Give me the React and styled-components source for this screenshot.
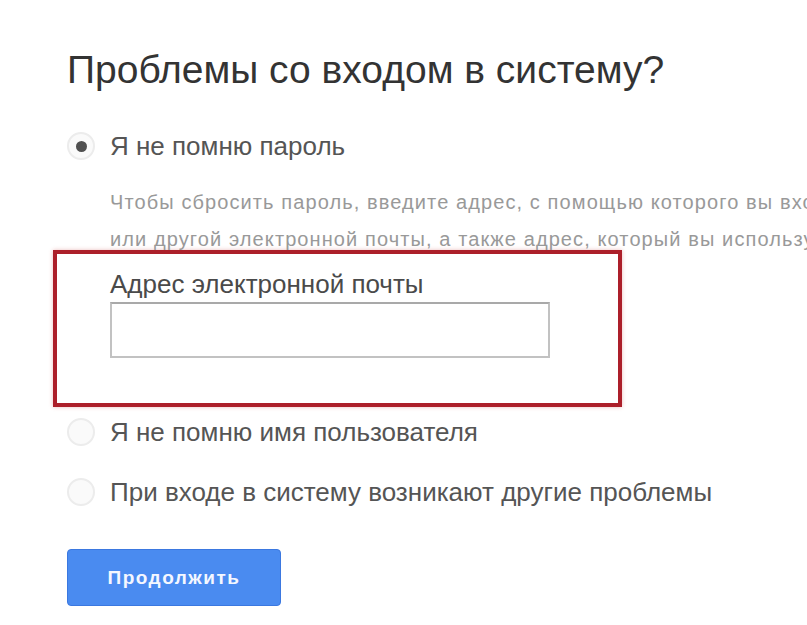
import styled, { createGlobalStyle } from "styled-components";

const GlobalStyle = createGlobalStyle`
  html, body {
    margin: 0;
    padding: 0;
    background: #ffffff;
    overflow: hidden;
  }
  body {
    font-family: "Liberation Sans", Arial, sans-serif;
  }
`;

const options = [
  { id: "password", label: "Я не помню пароль" },
  { id: "username", label: "Я не помню имя пользователя" },
  { id: "other", label: "При входе в систему возникают другие проблемы" },
];

function App() {
  return (
    <Page>
      <GlobalStyle />
      <Title>Проблемы со входом в систему?</Title>

      <Option top={36}>
        <Radio checked />
        <OptionLabel>{options[0].label}</OptionLabel>
      </Option>

      <Hint>
        <HintLine>
          Чтобы сбросить пароль, введите адрес, с помощью которого вы входите в аккаунт Google,
        </HintLine>
        <HintLine>
          или другой электронной почты, а также адрес, который вы используете для восстановления.
        </HintLine>
      </Hint>

      <Highlight>
        <FieldLabel>Адрес электронной почты</FieldLabel>
        <EmailInput type="text" />
      </Highlight>

      <Option top={9}>
        <Radio />
        <OptionLabel>{options[1].label}</OptionLabel>
      </Option>
      <Option top={28}>
        <Radio />
        <OptionLabel>{options[2].label}</OptionLabel>
      </Option>

      <ContinueButton>Продолжить</ContinueButton>
    </Page>
  );
}

const Page = styled.div`
  width: 807px;
  height: 625px;
  padding: 46px 0 0 53px;
  box-sizing: border-box;
  overflow: hidden;
`;

const Title = styled.h1`
  margin: 0 0 0 14px;
  font-size: 39px;
  font-weight: normal;
  line-height: 48px;
  color: #333333;
  white-space: nowrap;
`;

const Option = styled.div`
  display: flex;
  align-items: center;
  height: 32px;
  margin-top: ${(p) => p.top}px;
  margin-left: 14px;
`;

const Radio = styled.span`
  width: 28px;
  height: 28px;
  border-radius: 50%;
  border: 2px solid #ececec;
  background: #fafafa;
  box-sizing: border-box;
  margin-right: 15px;
  display: flex;
  align-items: center;
  justify-content: center;
  flex-shrink: 0;

  &::after {
    content: "";
    width: 11px;
    height: 11px;
    border-radius: 50%;
    background: #505050;
    display: ${(p) => (p.checked ? "block" : "none")};
  }
`;

const OptionLabel = styled.span`
  font-size: 26px;
  color: #555555;
  white-space: nowrap;
`;

const Hint = styled.div`
  margin: 22px 0 0 57px;
  font-size: 20px;
  letter-spacing: 1.1px;
  line-height: 37px;
  color: #999999;
`;

const HintLine = styled.div`
  white-space: nowrap;
`;

const Highlight = styled.div`
  width: 569px;
  height: 157px;
  margin-top: -8px;
  border: 4px solid #ac1f2a;
  box-shadow: 0 0 4px rgba(200, 60, 60, 0.35);
  box-sizing: border-box;
  padding: 16px 0 0 53px;
`;

const FieldLabel = styled.div`
  font-size: 26px;
  color: #4a4a4a;
  line-height: 28px;
`;

const EmailInput = styled.input`
  display: block;
  width: 440px;
  height: 56px;
  margin-top: 4px;
  box-sizing: border-box;
  border: 2px solid #c2c2c2;
  border-top-color: #a9a9a9;
  background: #ffffff;
  outline: none;
`;

const ContinueButton = styled.button`
  display: block;
  margin: 41px 0 0 14px;
  width: 214px;
  height: 57px;
  border: 1px solid #3b78e0;
  border-radius: 4px;
  background: #4a8bf0;
  color: #f4f7ff;
  font-family: "Liberation Sans", Arial, sans-serif;
  font-size: 19px;
  font-weight: bold;
  letter-spacing: 1.5px;
  cursor: pointer;
`;

export default App;
